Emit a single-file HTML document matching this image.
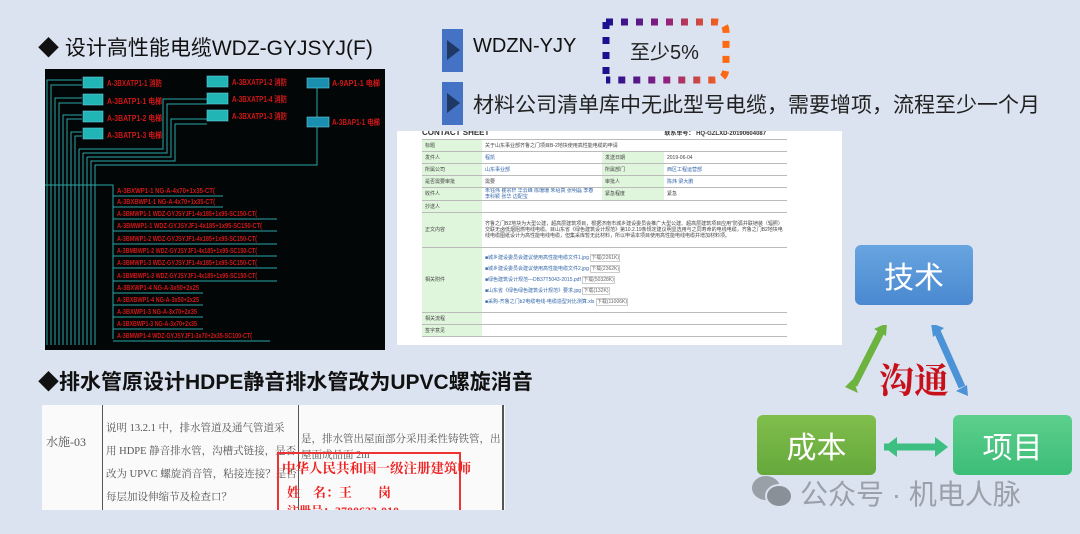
<!DOCTYPE html>
<html><head><meta charset="utf-8"><style>
body{margin:0;width:1080px;height:534px;background:#dbe3f0;position:relative;overflow:hidden;font-family:"Liberation Sans","Noto Sans CJK SC",sans-serif}
.a{position:absolute;white-space:nowrap}
.box{position:absolute;border-radius:6px;color:#fff;font-size:30px;display:flex;align-items:center;justify-content:center}
table{border-collapse:collapse;font-size:5px;color:#444;width:100%;table-layout:fixed}
td{border-bottom:1.5px solid #bbb;padding:0 3px;height:11px;white-space:normal;overflow:hidden;line-height:6px}
td.l,td.g{background:#dff5dc}
.lk{color:#36a}
</style></head><body>
<div class="a" style="left:38px;top:32px;font-size:21px;color:#111">◆ 设计高性能电缆WDZ-GYJSYJ(F)</div>

<svg class="a" style="left:45px;top:69px" width="340" height="281" viewBox="0 0 340 281">
<rect width="340" height="281" fill="#030607"/>
<g stroke="#2aa6a6" stroke-width="1" fill="none">
<path d="M2 276V11H37M6 276V16H37M10 276V29H37M14 276V34H37M18 276V46H37M22 276V50H37M26 276V63H37M30 276V67H37"/>
<path d="M34 276V80M38 276V84M42 276V88"/>
<path d="M34 80H118V30H162M38 84H122V35H162M42 88H126V50H162M46 276V92H130V55H162M50 276V96H272V88"/>
<path d="M272 18V48M272 58V96"/>
<path d="M0 116H68V270"/>
<path d="M68 127H178M68 138H178M68 150H232M68 162H232M68 175H232M68 187H232M68 199H232M68 212H232M68 224H158M68 236H158M68 248H158M68 260H158M68 272H225"/>
</g>
<g fill="#22b5b5" stroke="#6cd" stroke-width="0.6"><rect x="38" y="8" width="20" height="11"/><rect x="38" y="25" width="20" height="11"/><rect x="38" y="42" width="20" height="11"/><rect x="38" y="59" width="20" height="11"/><rect x="162" y="7" width="21" height="11"/><rect x="162" y="24" width="21" height="11"/><rect x="162" y="41" width="21" height="11"/><rect x="262" y="9" width="22" height="10" fill="#1a8fb0"/><rect x="262" y="48" width="22" height="10" fill="#1a8fb0"/></g>
<g fill="#d01818" font-size="8" font-weight="bold" font-family="Liberation Sans Narrow,Liberation Sans,sans-serif">
<text x="62" y="17" textLength="55" lengthAdjust="spacingAndGlyphs">A-3BXATP1-1 消防</text><text x="62" y="35" textLength="55" lengthAdjust="spacingAndGlyphs">A-3BATP1-1 电梯</text><text x="62" y="52" textLength="55" lengthAdjust="spacingAndGlyphs">A-3BATP1-2 电梯</text><text x="62" y="69" textLength="55" lengthAdjust="spacingAndGlyphs">A-3BATP1-3 电梯</text>
<text x="187" y="16" textLength="55" lengthAdjust="spacingAndGlyphs">A-3BXATP1-2 消防</text><text x="187" y="33" textLength="55" lengthAdjust="spacingAndGlyphs">A-3BXATP1-4 消防</text><text x="187" y="50" textLength="55" lengthAdjust="spacingAndGlyphs">A-3BXATP1-3 消防</text>
<text x="287" y="17" textLength="48" lengthAdjust="spacingAndGlyphs">A-9AP1-1 电梯</text><text x="287" y="56" textLength="48" lengthAdjust="spacingAndGlyphs">A-3BAP1-1 电梯</text>
<g font-size="7.5">
<text x="72" y="124" textLength="98" lengthAdjust="spacingAndGlyphs">A-3BXWP1-1 NG-A-4x70+1x35-CT(</text><text x="72" y="135" textLength="98" lengthAdjust="spacingAndGlyphs">A-3BXBWP1-1 NG-A-4x70+1x35-CT(</text>
<text x="72" y="147" textLength="140" lengthAdjust="spacingAndGlyphs">A-3BMWP1-1 WDZ-GYJSYJF1-4x185+1x95-SC150-CT(</text><text x="72" y="159" textLength="145" lengthAdjust="spacingAndGlyphs">A-3BMWP1-1 WDZ-GYJSYJF1-4x185+1x95-SC150-CT(</text><text x="72" y="172" textLength="140" lengthAdjust="spacingAndGlyphs">A-3BMWP1-2 WDZ-GYJSYJF1-4x185+1x95-SC150-CT(</text><text x="72" y="184" textLength="140" lengthAdjust="spacingAndGlyphs">A-3BMBWP1-2 WDZ-GYJSYJF1-4x185+1x95-SC150-CT(</text><text x="72" y="196" textLength="140" lengthAdjust="spacingAndGlyphs">A-3BMWP1-3 WDZ-GYJSYJF1-4x185+1x95-SC150-CT(</text><text x="72" y="209" textLength="140" lengthAdjust="spacingAndGlyphs">A-3BMBWP1-3 WDZ-GYJSYJF1-4x185+1x95-SC150-CT(</text>
<text x="72" y="221" textLength="82" lengthAdjust="spacingAndGlyphs">A-3BXWP1-4 NG-A-3x50+2x25</text><text x="72" y="233" textLength="82" lengthAdjust="spacingAndGlyphs">A-3BXBWP1-4 NG-A-3x50+2x25</text><text x="72" y="245" textLength="80" lengthAdjust="spacingAndGlyphs">A-3BXWP1-3 NG-A-3x70+2x35</text><text x="72" y="257" textLength="80" lengthAdjust="spacingAndGlyphs">A-3BXBWP1-3 NG-A-3x70+2x35</text><text x="72" y="269" textLength="135" lengthAdjust="spacingAndGlyphs">A-3BMWP1-4 WDZ-GYJSYJF1-3x70+2x35-SC100-CT(</text></g></g>
</svg>

<div class="a" style="left:442px;top:29px;width:21px;height:43px;background:#4472c4"></div>
<div class="a" style="left:447px;top:40px;width:0;height:0;border-left:13px solid #1f3864;border-top:10px solid transparent;border-bottom:10px solid transparent"></div>
<div class="a" style="left:473px;top:35px;font-size:20px;color:#111">WDZN-YJY</div>
<div class="a" style="left:442px;top:82px;width:21px;height:43px;background:#4472c4"></div>
<div class="a" style="left:447px;top:93px;width:0;height:0;border-left:13px solid #1f3864;border-top:10px solid transparent;border-bottom:10px solid transparent"></div>
<div class="a" style="left:473px;top:89px;font-size:21px;color:#222">材料公司清单库中无此型号电缆，需要增项，流程至少一个月</div>

<svg class="a" style="left:596px;top:12px" width="145" height="75">
<defs><linearGradient id="g2" x1="0" x2="1"><stop offset="0" stop-color="#1a1090"/><stop offset="0.5" stop-color="#902080"/><stop offset="1" stop-color="#ff6a10"/></linearGradient></defs>
<path d="M10 10H120Q130 10 130 20V55Q130 68 118 68H10" stroke="url(#g2)" stroke-width="7" stroke-dasharray="7 8" fill="none"/>
<path d="M10 10V68" stroke="#1a1090" stroke-width="7" stroke-dasharray="7 8" fill="none"/>
</svg>
<div class="a" style="left:630px;top:36px;font-size:20px;color:#222">至少5%</div>

<div class="a" style="left:397px;top:131px;width:445px;height:214px;background:#fff;overflow:hidden">
<div style="font-size:8px;font-weight:bold;color:#333;margin:-3px 0 0 25px">CONTACT SHEET<span style="margin-left:175px;font-size:6px">联系单号：  HQ-GZLXD-20190604087</span></div>
<div style="margin:2px 0 0 25px;width:365px;border-top:1.5px solid #bbb">
<table>
<colgroup><col style="width:60px"><col style="width:120px"><col style="width:62px"><col></colgroup>
<tr><td class="l">标题</td><td colspan="3">关于山东事业部齐鲁之门项目B-2地块使用高性能电缆的申请</td></tr>
<tr><td class="l">发件人</td><td class="lk">程凯</td><td class="g">发送日期</td><td>2019-06-04</td></tr>
<tr><td class="l">所属公司</td><td class="lk">山东事业部</td><td class="g">所属部门</td><td class="lk">西区工程运营部</td></tr>
<tr><td class="l">是否需要审批</td><td>需要</td><td class="g">审批人</td><td class="lk">陈炜 梁大鹏</td></tr>
<tr><td class="l">收件人</td><td class="lk">朱钰伟 瞿宗轩 华云峰 陈珊珊 朱绍真 张明磊 李春 李科颖 张华 边配宝</td><td class="g">紧急程度</td><td>紧急</td></tr>
<tr><td class="l">抄送人</td><td colspan="3"></td></tr>
<tr><td class="l" style="height:34px">正文内容</td><td colspan="3">齐鲁之门B2地块为大型公建，超高层建筑项目，根据济南市城乡建设委员会推广大型公建、超高层建筑项目应用"防弧并联铠装（辐照）交联无卤低烟阻燃电线电缆。目山东省《绿色建筑设计规范》第10.2.19条规定建议明显选用与之同寿命的电线电缆，齐鲁之门B2地块电线电缆图纸设计为高性能电线电缆，但集采库暂无此材料，所以申请本项目使用高性能电线电缆并增加材料项。</td></tr>
<tr><td class="l" style="height:64px">相关附件</td><td colspan="3" class="lk" style="line-height:11px">■城乡建设委员会建议使用高性能电缆文件1.jpg <span style="color:#666;border:1px solid #ccc">下载(2261K)</span><br>■城乡建设委员会建议使用高性能电缆文件2.jpg <span style="color:#666;border:1px solid #ccc">下载(2362K)</span><br>■绿色建筑设计规范—DB37T5043-2015.pdf <span style="color:#666;border:1px solid #ccc">下载(50328K)</span><br>■山东省《绿色绿色建筑设计规范》要求.jpg <span style="color:#666;border:1px solid #ccc">下载(132K)</span><br>■采购-齐鲁之门b2电缆电线-电缆造型对比测算.xls <span style="color:#666;border:1px solid #ccc">下载(11006K)</span></td></tr>
<tr><td class="l">相关流程</td><td colspan="3"></td></tr>
<tr><td class="l">签字意见</td><td colspan="3"></td></tr>
</table></div></div>

<div class="a" style="left:38px;top:366px;font-size:21px;font-weight:bold;color:#111">◆排水管原设计HDPE静音排水管改为UPVC螺旋消音</div>

<div class="a" style="left:42px;top:405px;width:463px;height:105px;background:#fbfafa;overflow:hidden;font-family:'Liberation Serif','Noto Serif CJK SC',serif;color:#555">
<div class="a" style="left:60px;top:0;width:1px;height:105px;background:#555"></div>
<div class="a" style="left:256px;top:0;width:1px;height:105px;background:#555"></div>
<div class="a" style="left:460px;top:0;width:2px;height:105px;background:#555"></div>
<div class="a" style="left:4px;top:28px;font-size:12px">水施-03</div>
<div class="a" style="left:64px;top:12px;font-size:10.5px;line-height:23px">说明 13.2.1 中，排水管道及通气管道采<br>用 HDPE 静音排水管，沟槽式链接，是否<br>改为 UPVC 螺旋消音管，粘接连接？是否<br>每层加设伸缩节及检查口？</div>
<div class="a" style="left:259px;top:27px;font-size:10.5px;line-height:16px">是，排水管出屋面部分采用柔性铸铁管，出<br>屋面成品面 2m</div>
<div class="a" style="left:235px;top:47px;width:180px;height:70px;border:2px solid #e33;color:#e22;font-weight:bold">
<div style="font-size:13.5px;margin:3px 0 0 3px">中华人民共和国一级注册建筑师</div>
<div style="font-size:13px;margin:5px 0 0 8px">姓　名：王　　岗</div>
<div style="font-size:12px;margin:1px 0 0 8px">注册号：3700623-010</div></div>
</div>

<div class="box" style="left:855px;top:245px;width:118px;height:60px;background:linear-gradient(#68a4e0,#4a89d0)">技术</div>
<div class="box" style="left:757px;top:415px;width:119px;height:60px;background:linear-gradient(#80be4c,#66a83c)">成本</div>
<div class="box" style="left:953px;top:415px;width:119px;height:60px;background:linear-gradient(#5cd08c,#3cbd78)">项目</div>
<div class="a" style="left:879px;top:354px;font-size:35px;font-weight:bold;color:#c8101a;font-family:'Noto Serif CJK SC',serif">沟通</div>
<svg class="a" style="left:840px;top:325px" width="160" height="140">
<path d="M5 62L18 68 13 54ZM47 -2 34 4 46 11Z" fill="#6db33f"/><path d="M14 60L42 5" stroke="#6db33f" stroke-width="7"/>
<path d="M128 71L116 66 127 60ZM91 -2 104 3 93 12Z" fill="#4b93d6"/><path d="M97 6L122 62" stroke="#4b93d6" stroke-width="7"/>
<path d="M44 122H104" stroke="#3cbf80" stroke-width="7"/><path d="M44 122L57 112V132ZM108 122 95 112V132Z" fill="#3cbf80"/>
</svg>
<svg class="a" style="left:750px;top:474px" width="45" height="36"><ellipse cx="16" cy="14" rx="14" ry="12" fill="#9aa0a8"/><ellipse cx="29" cy="22" rx="13" ry="11" fill="#8a9098" stroke="#dbe3f0" stroke-width="2"/></svg>
<div class="a" style="left:800px;top:473px;font-size:28px;color:#9ba1aa">公众号 · 机电人脉</div>
</body></html>
